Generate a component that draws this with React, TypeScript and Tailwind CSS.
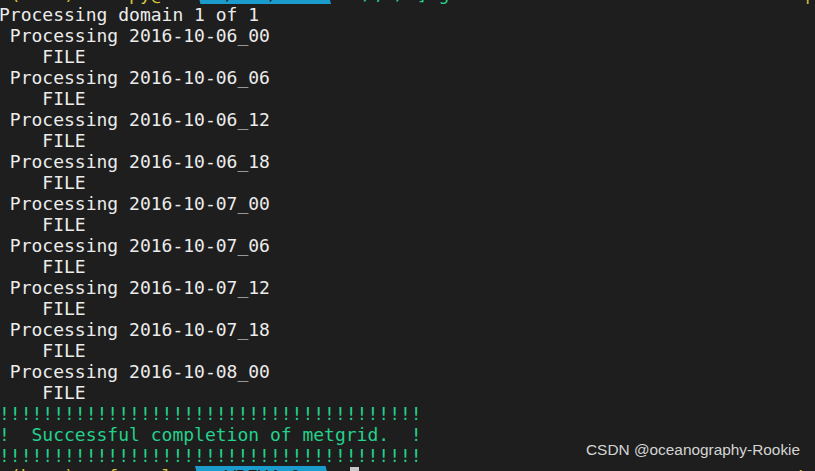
import React from "react";

const lines: string[] = [
  "Processing domain 1 of 1",
  " Processing 2016-10-06_00",
  "    FILE",
  " Processing 2016-10-06_06",
  "    FILE",
  " Processing 2016-10-06_12",
  "    FILE",
  " Processing 2016-10-06_18",
  "    FILE",
  " Processing 2016-10-07_00",
  "    FILE",
  " Processing 2016-10-07_06",
  "    FILE",
  " Processing 2016-10-07_12",
  "    FILE",
  " Processing 2016-10-07_18",
  "    FILE",
  " Processing 2016-10-08_00",
  "    FILE",
];

const bang = "!!!!!!!!!!!!!!!!!!!!!!!!!!!!!!!!!!!!!!!";

function PowerBar({ text }: { text: string }) {
  return (
    <span className="h-full w-[136px] shrink-0 bg-[#1a9ccd] [clip-path:polygon(0_0,96%_0,100%_100%,4%_100%)] text-[#1b1b1b] flex items-center justify-center">
      {text}
    </span>
  );
}

export default function App() {
  return (
    <div className="relative w-[815px] h-[471px] overflow-hidden bg-[#1e1e1e]">
      <div
        className="-mt-[17px] -ml-[1px] flex flex-col text-[18px] leading-[21px] text-[#ececec] whitespace-pre"
        style={{ fontFamily: '"DejaVu Sans Mono", monospace' }}
      >
        <div className="flex h-[21px] overflow-hidden">
          <span className="w-[196px] shrink-0 overflow-hidden text-[#d6c53a]">{" (base) wrf py@localhost "}</span>
          <PowerBar text="~/WPS/WPS" />
          <span className="pl-[10px] text-[#23d18b]">{" ~/, / ] g"}</span>
          <span className="ml-auto pr-[2px] text-[#c8c83a]">{"< |"}</span>
        </div>
        {lines.map((l, i) => (
          <div key={i} className="h-[21px]">
            {l}
          </div>
        ))}
        <div className="h-[21px] text-[#23d18b]">{bang}</div>
        <div className="h-[21px] text-[#23d18b]">{"!  Successful completion of metgrid.  !"}</div>
        <div className="h-[21px] text-[#23d18b]">{bang}</div>
        <div className="flex h-[21px] items-start overflow-hidden">
          <span className="w-[196px] shrink-0 overflow-hidden text-[#d6c53a]">{" (base) wrf py@localhost "}</span>
          <PowerBar text="WRFV4.0" />
          <span className="ml-[19px] mt-[1px] w-[9px] h-[19px] bg-[#c8c8c8]" />
          <span className="ml-auto pr-[12px] text-[#c8c83a]">{"/"}</span>
        </div>
      </div>
      <div
        className="absolute left-[586px] top-[441px] text-[15.4px] leading-[18px] text-[#d4d4d4]"
        style={{ fontFamily: '"Liberation Sans", Arial, sans-serif' }}
      >
        CSDN @oceanography-Rookie
      </div>
    </div>
  );
}
